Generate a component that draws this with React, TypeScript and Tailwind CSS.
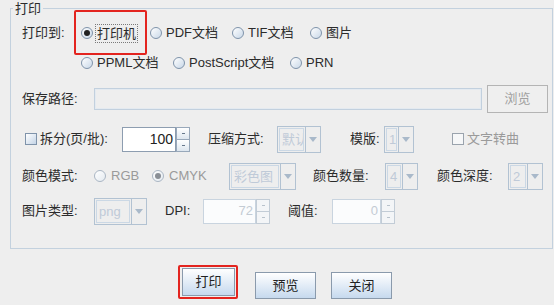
import React from "react";

const F = { fontFamily: '"Liberation Sans", "Noto Sans CJK SC", sans-serif' };

function Radio({ checked = false, disabled = false }: { checked?: boolean; disabled?: boolean }) {
  return (
    <span
      className={
        disabled
          ? "flex h-[12px] w-[12px] shrink-0 items-center justify-center rounded-full border border-[#aab6c4] bg-gradient-to-br from-[#ffffff] to-[#e4eaf0]"
          : "flex h-[12px] w-[12px] shrink-0 items-center justify-center rounded-full border border-[#7f93aa] bg-gradient-to-br from-[#ffffff] to-[#c9d8e8]"
      }
    >
      {checked && (
        <span className={disabled ? "h-[6px] w-[6px] rounded-full bg-[#8a8f96]" : "h-[6px] w-[6px] rounded-full bg-[#222222]"} />
      )}
    </span>
  );
}

function Check({ disabled = false }: { disabled?: boolean }) {
  return (
    <span
      className={
        disabled
          ? "block h-[12px] w-[12px] shrink-0 border border-[#9aa3ad] bg-[#f6f7f8]"
          : "block h-[12px] w-[12px] shrink-0 border border-[#7f93aa] bg-gradient-to-br from-[#ffffff] to-[#c4d4e6]"
      }
    />
  );
}

function Tri() {
  return (
    <svg width="8" height="5" viewBox="0 0 8 5">
      <polygon points="0,0 8,0 4,5" fill="#a9b9ca" />
    </svg>
  );
}

function Combo({ w, text }: { w: string; text: string }) {
  return (
    <div className={`${w} flex h-[27px] shrink-0 border border-[#b2c2d2] bg-[#eeeeee]`}>
      <div className="m-[1px] flex min-w-0 flex-1 items-center overflow-hidden whitespace-nowrap border border-[#cbd8e5] pl-[2px] text-[13px] leading-none text-[#bfcad8]">
        {text}
      </div>
      <div className="flex w-[15px] shrink-0 items-center justify-center border-l border-[#b2c2d2]">
        <Tri />
      </div>
    </div>
  );
}

function Spinner({ w, value, disabled = false }: { w: string; value: string; disabled?: boolean }) {
  return (
    <div className={`${w} flex h-[25px] shrink-0`}>
      <div
        className={
          disabled
            ? "flex flex-1 items-center justify-end border border-[#c9d4df] bg-[#fbfcfd] pr-[2px] text-[13px] text-[#c3cbd4]"
            : "flex flex-1 items-center justify-end border border-[#8d9db0] bg-white pr-[2px] text-[14px] text-[#222222]"
        }
      >
        {value}
      </div>
      <div className="flex w-[14px] flex-col">
        <div className={disabled ? "flex flex-1 items-center justify-center border border-[#c2ccd6] bg-[#f3f5f7]" : "flex flex-1 items-center justify-center border border-[#98a8ba] bg-gradient-to-b from-[#ffffff] to-[#dde6ef]"}>
          <span className={disabled ? "block h-[1px] w-[3px] bg-[#b8c2cc]" : "block h-[1px] w-[3px] bg-[#66788c]"} />
        </div>
        <div className={disabled ? "flex flex-1 items-center justify-center border border-t-0 border-[#c2ccd6] bg-[#f3f5f7]" : "flex flex-1 items-center justify-center border border-t-0 border-[#98a8ba] bg-gradient-to-b from-[#ffffff] to-[#dde6ef]"}>
          <span className={disabled ? "block h-[1px] w-[3px] bg-[#b8c2cc]" : "block h-[1px] w-[3px] bg-[#66788c]"} />
        </div>
      </div>
    </div>
  );
}

function Label({ w, children, gray = false }: { w?: string; children: React.ReactNode; gray?: boolean }) {
  return (
    <span className={`${w ?? ""} shrink-0 whitespace-nowrap text-[13px] ${gray ? "text-[#9a9a9a]" : "text-[#2b2b2b]"}`}>
      {children}
    </span>
  );
}

export default function App() {
  return (
    <div className="relative h-[305px] w-[554px] overflow-hidden bg-[#eeeeee] text-[#2b2b2b]" style={F}>
      {/* Titled panel */}
      <div className="relative ml-[10px] mt-[8px] flex h-[241px] w-[543px] flex-col border border-[#c3d1de] pl-[11px] pr-[4px]">
        <span className="absolute left-[2px] top-[-9px] bg-[#eeeeee] px-[2px] text-[13px] leading-[17px] text-[#2b2b2b]">打印</span>

        {/* Row 1 */}
        <div className="mt-[14px] flex h-[20px] items-center">
          <Label w="w-[59px]">打印到:</Label>
          <div className="flex w-[69px] items-center">
            <Radio checked />
            <span className="ml-[2px] border border-dotted border-[#7a7a7a] px-[1px] text-[13px] leading-[17px]">打印机</span>
          </div>
          <div className="flex w-[82px] items-center">
            <Radio />
            <Label w="ml-[4px]">PDF文档</Label>
          </div>
          <div className="flex w-[78px] items-center">
            <Radio />
            <Label w="ml-[4px]">TIF文档</Label>
          </div>
          <div className="flex items-center">
            <Radio />
            <Label w="ml-[4px]">图片</Label>
          </div>
        </div>

        {/* Row 2 */}
        <div className="mt-[10px] flex h-[20px] items-center pl-[59px]">
          <div className="flex w-[92px] items-center">
            <Radio />
            <Label w="ml-[4px]">PPML文档</Label>
          </div>
          <div className="flex w-[117px] items-center">
            <Radio />
            <Label w="ml-[4px]">PostScript文档</Label>
          </div>
          <div className="flex items-center">
            <Radio />
            <Label w="ml-[4px]">PRN</Label>
          </div>
        </div>

        {/* Row 3 */}
        <div className="mt-[12px] flex h-[28px] items-center">
          <Label w="w-[72px]">保存路径:</Label>
          <div className="h-[22px] flex-1 border border-[#c2d0de] bg-[#eeeeee] shadow-[inset_0_0_0_1px_#e4eaf0]" />
          <div className="ml-[5px] flex h-[28px] w-[61px] items-center justify-center border border-[#b4b4b4] bg-[#efefef] text-[13px] text-[#a0a0a0]">
            浏览
          </div>
        </div>

        {/* Row 4 */}
        <div className="mt-[12px] flex h-[28px] items-center">
          <span className="ml-[3px]"><Check /></span>
          <Label w="ml-[3px] w-[82px]">拆分(页/批):</Label>
          <Spinner w="w-[68px]" value="100" />
          <Label w="ml-[18px] w-[69px]">压缩方式:</Label>
          <Combo w="w-[44px]" text="默认" />
          <Label w="ml-[29px] w-[34px]">模版:</Label>
          <Combo w="w-[30px]" text="1" />
          <span className="ml-[38px]"><Check disabled /></span>
          <Label w="ml-[3px]" gray>文字转曲</Label>
        </div>

        {/* Row 5 */}
        <div className="mt-[9px] flex h-[28px] items-center">
          <Label w="w-[72px]">颜色模式:</Label>
          <div className="flex w-[58px] items-center">
            <Radio disabled />
            <Label w="ml-[5px]" gray>RGB</Label>
          </div>
          <div className="flex w-[77px] items-center">
            <Radio checked disabled />
            <Label w="ml-[5px]" gray>CMYK</Label>
          </div>
          <Combo w="w-[67px]" text="彩色图" />
          <Label w="ml-[17px] w-[72px]">颜色数量:</Label>
          <Combo w="w-[33px]" text="4" />
          <Label w="ml-[19px] w-[71px]">颜色深度:</Label>
          <Combo w="w-[35px]" text="2" />
        </div>

        {/* Row 6 */}
        <div className="mt-[8px] flex h-[26px] items-center">
          <Label w="w-[72px]">图片类型:</Label>
          <Combo w="w-[53px]" text="png" />
          <Label w="ml-[18px] w-[38px]">DPI:</Label>
          <Spinner w="w-[67px]" value="72" disabled />
          <Label w="ml-[18px] w-[44px]">阈值:</Label>
          <Spinner w="w-[63px]" value="0" disabled />
        </div>
      </div>

      {/* Buttons */}
      <div className="mt-[19px] flex items-start pl-[182px]">
        <div className="flex h-[28px] w-[53px] items-center justify-center border border-[#8a9aac] bg-gradient-to-b from-[#ffffff] to-[#c6d9ee] text-[13px] text-[#222222]">
          打印
        </div>
        <div className="ml-[20px] mt-[4px] flex h-[27px] w-[61px] items-center justify-center border border-[#8a9aac] bg-gradient-to-b from-[#ffffff] to-[#c6d9ee] text-[13px] text-[#222222]">
          预览
        </div>
        <div className="ml-[15px] mt-[4px] flex h-[27px] w-[61px] items-center justify-center border border-[#8a9aac] bg-gradient-to-b from-[#ffffff] to-[#c6d9ee] text-[13px] text-[#222222]">
          关闭
        </div>
      </div>

      {/* Red annotation boxes */}
      <div className="pointer-events-none absolute left-[74px] top-[10px] h-[45px] w-[73px] rounded-[2px] border-2 border-[#e3241f]" />
      <div className="pointer-events-none absolute left-[178px] top-[265px] h-[34px] w-[60px] rounded-[2px] border-2 border-[#e3241f]" />
    </div>
  );
}
